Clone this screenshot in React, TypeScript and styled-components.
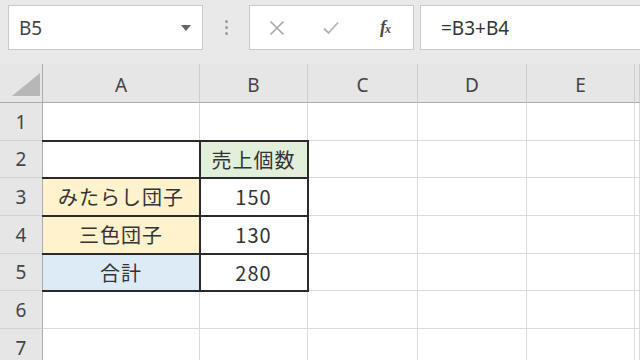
import { Fragment } from "react";
import styled, { createGlobalStyle } from "styled-components";

const GlobalStyle = createGlobalStyle`
  html, body {
    margin: 0;
    padding: 0;
    background: #fff;
    overflow: hidden;
  }
  body {
    font-family: "Noto Sans CJK JP", "Noto Sans", sans-serif;
  }
`;

const Window = styled.div`
  width: 640px;
  height: 360px;
  overflow: hidden;
  display: flex;
  flex-direction: column;
  background: #fff;
`;

const Toolbar = styled.div`
  flex: none;
  height: 64px;
  box-sizing: border-box;
  padding: 5px 0 0 8px;
  background: #e9e9e9;
  display: flex;
  align-items: flex-start;
`;

const Box = styled.div`
  height: 45px;
  box-sizing: border-box;
  background: #fff;
  border: 1px solid #c8c8c8;
  display: flex;
  align-items: center;
`;

const NameBox = styled(Box)`
  width: 195px;
  justify-content: space-between;
  padding: 0 11px 0 10px;
  font-family: "Noto Sans", sans-serif;
  font-size: 19px;
  color: #444;
`;

const Dots = styled.div`
  width: 46px;
  height: 45px;
  display: flex;
  flex-direction: column;
  align-items: center;
  justify-content: center;
  gap: 3px;

  span {
    width: 3px;
    height: 3px;
    border-radius: 50%;
    background: #9a9a9a;
  }
`;

const FxGroup = styled(Box)`
  width: 165px;
`;

const FxSlot = styled.div`
  width: 54px;
  height: 100%;
  display: flex;
  align-items: center;
  justify-content: center;
`;

const FxLabel = styled.span`
  font-family: "Liberation Serif", serif;
  font-style: italic;
  font-weight: bold;
  font-size: 18px;
  color: #4a4a4a;
  letter-spacing: -1px;

  small {
    font-size: 12px;
  }
`;

const FormulaBar = styled(Box)`
  flex: 1;
  margin-left: 6px;
  border-right: none;
  padding-left: 20px;
  font-family: "Noto Sans", sans-serif;
  font-size: 19px;
  color: #333;
`;

const Sheet = styled.div`
  display: grid;
  grid-template-columns: 43px 157px 108px 110px 109px 108px 1fr;
  grid-template-rows: 39px 38px 37px 38px 38px 37px 38px 38px;
`;

const Corner = styled.div`
  background: #e6e6e6;
  border-right: 1px solid #ababab;
  border-bottom: 1px solid #ababab;
  display: flex;
  align-items: flex-end;
  justify-content: flex-end;
  padding: 0 2px 6px 0;
`;

const ColHead = styled.div`
  background: #e6e6e6;
  border-right: 1px solid #cdcdcd;
  border-bottom: 1px solid #ababab;
  display: flex;
  align-items: center;
  justify-content: center;
  padding-top: 3px;
  font-family: "Noto Sans", sans-serif;
  font-size: 19px;
  color: #444;
`;

const RowHead = styled.div`
  background: #e6e6e6;
  border-right: 1px solid #ababab;
  border-bottom: 1px solid #d2d2d2;
  display: flex;
  align-items: center;
  justify-content: center;
  font-family: "Noto Sans", sans-serif;
  font-size: 19px;
  color: #444;
`;

const LINE = "2px solid #2a2a2a";

/* $edges: which sides carry the dark table border, e.g. "trb" */
const Cell = styled.div<{ $bg?: string; $edges?: string }>`
  position: relative;
  background: ${(p) => p.$bg ?? "#fff"};
  border-right: 1px solid #dadada;
  border-bottom: 1px solid #dadada;
  display: flex;
  align-items: center;
  justify-content: center;
  font-family: "Noto Sans CJK JP", "Noto Sans", sans-serif;
  font-size: 20px;
  letter-spacing: 1px;
  color: #333;

  ${(p) =>
    p.$edges &&
    `
    z-index: 1;
    &::after {
      content: "";
      position: absolute;
      top: -1px;
      left: -1px;
      right: -2px;
      bottom: -2px;
      pointer-events: none;
      border-top: ${p.$edges.includes("t") ? LINE : "none"};
      border-right: ${p.$edges.includes("r") ? LINE : "none"};
      border-bottom: ${p.$edges.includes("b") ? LINE : "none"};
      border-left: ${p.$edges.includes("l") ? LINE : "none"};
    }
  `}
`;

type CellData = { text?: string; bg?: string; edges?: string };

const columns = ["A", "B", "C", "D", "E", ""];

const tableRows: CellData[][] = [
  [{}, {}],
  [{ edges: "t" }, { text: "売上個数", bg: "#e2efda", edges: "trbl" }],
  [{ text: "みたらし団子", bg: "#fff2cc", edges: "trb" }, { text: "150", edges: "trbl" }],
  [{ text: "三色団子", bg: "#fff2cc", edges: "trb" }, { text: "130", edges: "trbl" }],
  [{ text: "合計", bg: "#ddebf7", edges: "trb" }, { text: "280", edges: "trbl" }],
  [{}, {}],
  [{}, {}],
];

export default function App() {
  return (
    <Window>
      <GlobalStyle />
      <Toolbar>
        <NameBox>
          <span>B5</span>
          <svg width="10" height="6" viewBox="0 0 10 6">
            <path d="M0 0 H10 L5 6 Z" fill="#666" />
          </svg>
        </NameBox>
        <Dots>
          <span />
          <span />
          <span />
        </Dots>
        <FxGroup>
          <FxSlot>
            <svg width="16" height="16" viewBox="0 0 16 16">
              <path d="M1.5 1.5 L14.5 14.5 M14.5 1.5 L1.5 14.5" stroke="#a8a8a8" strokeWidth="1.6" fill="none" />
            </svg>
          </FxSlot>
          <FxSlot>
            <svg width="16" height="14" viewBox="0 0 16 14">
              <path d="M1 7.5 L5.5 12 L15 1.5" stroke="#b5b5b5" strokeWidth="1.8" fill="none" />
            </svg>
          </FxSlot>
          <FxSlot>
            <FxLabel>
              f<small>x</small>
            </FxLabel>
          </FxSlot>
        </FxGroup>
        <FormulaBar>=B3+B4</FormulaBar>
      </Toolbar>
      <Sheet>
        <Corner>
          <svg width="28" height="23" viewBox="0 0 28 23">
            <path d="M28 0 V23 H0 Z" fill="#b7b7b7" />
          </svg>
        </Corner>
        {columns.map((c, i) => (
          <ColHead key={i}>{c}</ColHead>
        ))}
        {tableRows.map((row, r) => (
          <Fragment key={r}>
            <RowHead>{r + 1}</RowHead>
            {row.map((cell, i) => (
              <Cell key={i} $bg={cell.bg} $edges={cell.edges}>
                {cell.text}
              </Cell>
            ))}
            {[0, 1, 2, 3].map((i) => (
              <Cell key={`e${i}`} />
            ))}
          </Fragment>
        ))}
      </Sheet>
    </Window>
  );
}
